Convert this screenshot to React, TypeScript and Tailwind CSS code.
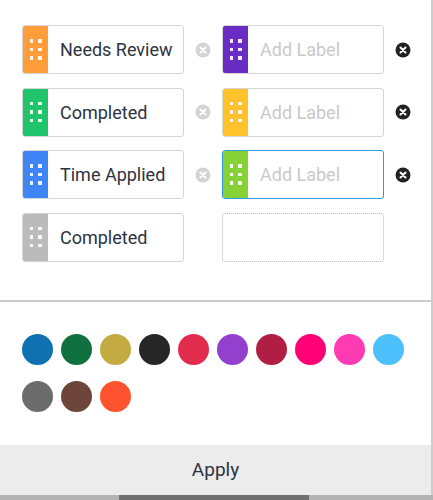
import React from "react";

type Label = {
  color: string;
  text?: string;
  focused?: boolean;
  removable?: boolean;
  dark?: boolean;
};

const rows: (Label | null)[][] = [
  [
    { color: "bg-[#ff9d3b]", text: "Needs Review", removable: true },
    { color: "bg-[#6a2dc4]", dark: true, removable: true },
  ],
  [
    { color: "bg-[#1fc46b]", text: "Completed", removable: true },
    { color: "bg-[#ffc22c]", dark: true, removable: true },
  ],
  [
    { color: "bg-[#3e85f5]", text: "Time Applied", removable: true },
    { color: "bg-[#85d136]", dark: true, focused: true, removable: true },
  ],
  [{ color: "bg-[#bbbbbb]", text: "Completed" }, null],
];

const swatches = [
  "bg-[#0f71b0]",
  "bg-[#10703f]",
  "bg-[#c3ab42]",
  "bg-[#262626]",
  "bg-[#e12c4d]",
  "bg-[#9340cf]",
  "bg-[#b01e43]",
  "bg-[#ff0077]",
  "bg-[#ff3bb4]",
  "bg-[#4bc0fa]",
  "bg-[#6c6c6c]",
  "bg-[#6e453a]",
  "bg-[#ff532f]",
];

function Grip() {
  return (
    <div className="grid grid-cols-2 gap-x-[5px] gap-y-[5px]">
      {Array.from({ length: 6 }).map((_, i) => (
        <span key={i} className="size-[3.5px] bg-white/90" />
      ))}
    </div>
  );
}

function RemoveIcon({ dark }: { dark?: boolean }) {
  return (
    <svg width="16" height="16" viewBox="0 0 16 16">
      <circle cx="8" cy="8" r="7.5" fill={dark ? "#222222" : "#d4d4d4"} />
      <path d="M5.5 5.5 L10.5 10.5 M10.5 5.5 L5.5 10.5" stroke="#ffffff" strokeWidth="2" strokeLinecap="round" />
    </svg>
  );
}

function LabelCell({ label }: { label: Label | null }) {
  if (!label) {
    return (
      <div className="flex w-[200px]">
        <div className="h-[49px] w-[162px] rounded-[3px] border border-dotted border-[#b5b5b5]" />
      </div>
    );
  }
  return (
    <div className="flex w-[200px] items-center">
      <div
        className={`flex h-[49px] w-[162px] overflow-hidden rounded-[3px] border ${
          label.focused ? "border-[#2b9be0]" : "border-[#d4d4d4]"
        } bg-white`}
      >
        <div className={`flex w-[25px] shrink-0 items-center justify-center ${label.color}`}>
          <Grip />
        </div>
        <div
          className={`flex items-center whitespace-nowrap pl-[12px] text-[18px] ${
            label.text ? "text-[#2c333f]" : "text-[#c9c9c9]"
          }`}
        >
          {label.text ?? "Add Label"}
        </div>
      </div>
      {label.removable ? (
        <div className="flex flex-1 justify-center">
          <RemoveIcon dark={label.dark} />
        </div>
      ) : null}
    </div>
  );
}

export default function App() {
  return (
    <div className="flex h-[500px] w-[433px] flex-col bg-white font-['Roboto',sans-serif]">
      <div className="flex flex-1 flex-col border-r-2 border-[#cccccc]">
        <div className="flex flex-col gap-[13.5px] pl-[22px] pt-[25px] pb-[38px]">
          {rows.map((row, i) => (
            <div key={i} className="flex">
              {row.map((label, j) => (
                <LabelCell key={j} label={label} />
              ))}
            </div>
          ))}
        </div>
        <div className="h-[2px] bg-[#cacaca]" />
        <div className="flex flex-wrap gap-x-[8px] gap-y-[16px] pl-[22px] pr-[20px] pt-[32px]">
          {swatches.map((c, i) => (
            <span key={i} className={`size-[31px] rounded-full ${c}`} />
          ))}
        </div>
        <div className="flex-1" />
        <div className="flex h-[50px] items-center justify-center bg-[#ececec] text-[19px] text-[#2c333f]">
          Apply
        </div>
      </div>
      <div className="flex h-[5px] bg-[#b3b3b3]">
        <div className="ml-[119px] w-[190px] bg-[#707070]" />
      </div>
    </div>
  );
}
